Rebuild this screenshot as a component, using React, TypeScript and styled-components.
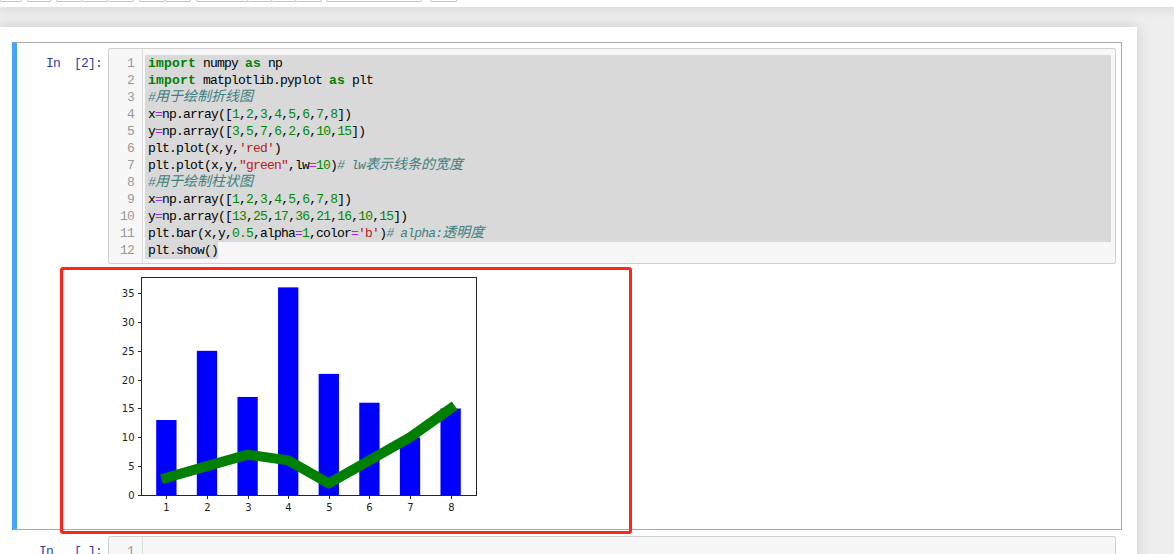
import React from "react";
import styled, { createGlobalStyle, css } from "styled-components";

const GlobalStyle = createGlobalStyle`
  html, body { margin: 0; padding: 0; }
  body {
    background: #eeeeee;
    width: 1174px;
    height: 554px;
    overflow: hidden;
    font-family: "Liberation Mono", "Noto Sans CJK SC", monospace;
  }
`;

const Page = styled.div`
  position: relative;
  width: 1174px;
  height: 554px;
  overflow: hidden;
`;

const Header = styled.div`
  position: relative;
  z-index: 2;
  height: 7px;
  background: #ffffff;
  box-shadow: 0 0 12px 1px rgba(87, 87, 87, 0.2);
  display: flex;
  align-items: flex-start;
`;

const ToolGroup = styled.div<{ $gap: number }>`
  display: flex;
  margin-left: ${(p) => p.$gap}px;
`;

const ToolButton = styled.div<{ $w: number }>`
  box-sizing: border-box;
  width: ${(p) => p.$w}px;
  height: 2px;
  border: 1px solid #c4c4c4;
  border-top: none;
  border-radius: 0 0 2px 2px;
  background: #ffffff;
  & + & {
    border-left: none;
  }
`;

const Site = styled.div`
  padding-top: 20px;
`;

const Container = styled.div`
  position: relative;
  z-index: 1;
  box-sizing: border-box;
  width: 1137px;
  min-height: 540px;
  background: #ffffff;
  box-shadow: 0 0 12px 1px rgba(87, 87, 87, 0.2);
  padding: 15px 15px 0 12px;
`;

const Cell = styled.div<{ $selected?: boolean }>`
  box-sizing: border-box;
  padding: 5px;
  ${(p) =>
    p.$selected
      ? css`
          border: 1px solid #ababab;
          border-left: 5px solid #42a5f5;
        `
      : css`
          border: 1px solid transparent;
        `}
`;

const Row = styled.div`
  display: flex;
  align-items: stretch;
`;

const Prompt = styled.div<{ $w: number }>`
  box-sizing: border-box;
  flex: 0 0 ${(p) => p.$w}px;
  padding: 7px 6px 0 0;
  text-align: right;
  color: #303f9f;
  font-size: 13px;
  letter-spacing: -0.8px;
  line-height: 17px;
  white-space: pre;
`;

const InputArea = styled.div`
  flex: 1;
  display: flex;
  border: 1px solid #cfcfcf;
  border-radius: 2px;
  background: #f7f7f7;
  font-size: 13px;
  letter-spacing: -0.8px;
  line-height: 17px;
`;

const Gutter = styled.div`
  box-sizing: border-box;
  flex: 0 0 34px;
  padding: 6px 8px 4px 0;
  border-right: 1px solid #dddddd;
  text-align: right;
  color: #999999;
`;

const GutterNum = styled.div`
  height: 17px;
`;

const Lines = styled.div`
  flex: 1;
  padding: 6px 4px 4px 2px;
  color: #000000;
`;

const Line = styled.div<{ $sel?: boolean }>`
  height: 17px;
  white-space: pre;
  padding-left: ${(p) => (p.$sel ? 3 : 0)}px;
  background: ${(p) => (p.$sel ? "#d9d9d9" : "transparent")};
`;

const PartSel = styled.span`
  display: inline-block;
  height: 17px;
  padding-left: 3px;
  background: #d9d9d9;
`;

const Kw = styled.span`
  color: #008000;
  font-weight: bold;
  letter-spacing: 0.2px;
`;
const Str = styled.span`
  color: #ba2121;
`;
const Num = styled.span`
  color: #008800;
`;
const Op = styled.span`
  color: #aa22ff;
`;
const Cm = styled.span`
  color: #408080;
  font-style: italic;
`;
const Cjk = styled.span`
  font-family: "Noto Sans CJK SC", sans-serif;
  font-size: 14px;
  letter-spacing: 0;
  line-height: 10px;
`;

const OutputBody = styled.div`
  padding: 4px 0;
  height: 252px;
`;

const Annotation = styled.div`
  position: absolute;
  left: 60px;
  top: 267px;
  width: 572px;
  height: 267px;
  box-sizing: border-box;
  border: 3px solid #ff2318;
  border-radius: 3px;
  pointer-events: none;
  z-index: 5;
`;

const toolGroups: { gap: number; widths: number[] }[] = [
  { gap: 0, widths: [22] },
  { gap: 5, widths: [24] },
  { gap: 5, widths: [26, 26, 26] },
  { gap: 5, widths: [26, 26] },
  { gap: 5, widths: [52, 24, 24, 26] },
  { gap: 4, widths: [96] },
  { gap: 8, widths: [27] },
];

const C = ({ children }: { children: React.ReactNode }) => <Cjk>{children}</Cjk>;

const arr = (nums: number[]) => (
  <>
    {"np.array(["}
    {nums.map((n, i) => (
      <React.Fragment key={i}>
        {i > 0 ? "," : ""}
        <Num>{n}</Num>
      </React.Fragment>
    ))}
    {"])"}
  </>
);

const codeLines: React.ReactNode[] = [
  <>
    <Kw>import</Kw> numpy <Kw>as</Kw> np
  </>,
  <>
    <Kw>import</Kw> matplotlib.pyplot <Kw>as</Kw> plt
  </>,
  <Cm>
    #<C>用于绘制折线图</C>
  </Cm>,
  <>
    x<Op>=</Op>
    {arr([1, 2, 3, 4, 5, 6, 7, 8])}
  </>,
  <>
    y<Op>=</Op>
    {arr([3, 5, 7, 6, 2, 6, 10, 15])}
  </>,
  <>
    plt.plot(x,y,<Str>'red'</Str>)
  </>,
  <>
    plt.plot(x,y,<Str>"green"</Str>,lw<Op>=</Op>
    <Num>10</Num>)
    <Cm>
      # lw<C>表示线条的宽度</C>
    </Cm>
  </>,
  <Cm>
    #<C>用于绘制柱状图</C>
  </Cm>,
  <>
    x<Op>=</Op>
    {arr([1, 2, 3, 4, 5, 6, 7, 8])}
  </>,
  <>
    y<Op>=</Op>
    {arr([13, 25, 17, 36, 21, 16, 10, 15])}
  </>,
  <>
    plt.bar(x,y,<Num>0.5</Num>,alpha<Op>=</Op>
    <Num>1</Num>,color<Op>=</Op>
    <Str>'b'</Str>)
    <Cm>
      # alpha:<C>透明度</C>
    </Cm>
  </>,
];

const xs = [1, 2, 3, 4, 5, 6, 7, 8];
const lineY = [3, 5, 7, 6, 2, 6, 10, 15];
const barY = [13, 25, 17, 36, 21, 16, 10, 15];

const AX_L = 34;
const AX_T = 9;
const AX_W = 335;
const AX_H = 218;
const X = (u: number) => AX_L + (u - 0.375) * (AX_W / 8.25);
const Y = (v: number) => AX_T + AX_H - v * (AX_H / 37.8);

const Chart = () => {
  const bw = 0.5 * (AX_W / 8.25);
  const pts = xs.map((u, i) => `${(X(u) - 1).toFixed(2)},${Y(lineY[i]).toFixed(2)}`).join(" ");
  const bottom = AX_T + AX_H + 0.5;
  return (
    <svg width="380" height="252" viewBox="0 0 380 252" style={{ display: "block" }}>
      {xs.map((u, i) => (
        <rect
          key={u}
          x={X(u) - 1 - bw / 2}
          y={Y(barY[i])}
          width={bw}
          height={AX_T + AX_H - Y(barY[i])}
          fill="#0000ff"
        />
      ))}
      <polyline
        points={pts}
        fill="none"
        stroke="#008000"
        strokeWidth={10}
        strokeLinejoin="round"
        strokeLinecap="square"
      />
      <rect
        x={AX_L - 0.5}
        y={AX_T + 0.5}
        width={AX_W}
        height={AX_H}
        fill="none"
        stroke="#262626"
        strokeWidth={1}
      />
      {[0, 5, 10, 15, 20, 25, 30, 35].map((v) => {
        const y = Math.round(Y(v)) + 0.5;
        return (
          <g key={v}>
            <line x1={AX_L - 4} x2={AX_L - 0.5} y1={y} y2={y} stroke="#262626" strokeWidth={1} />
            <text
              x={AX_L - 7.5}
              y={y + 3.5}
              textAnchor="end"
              fontFamily="DejaVu Sans, sans-serif"
              fontSize="10"
              fill="#222"
            >
              {v}
            </text>
          </g>
        );
      })}
      {xs.map((u) => {
        const x = Math.round(X(u) - 1) + 0.5;
        return (
          <g key={u}>
            <line x1={x} x2={x} y1={bottom} y2={bottom + 3.5} stroke="#262626" strokeWidth={1} />
            <text
              x={x}
              y={bottom + 15}
              textAnchor="middle"
              fontFamily="DejaVu Sans, sans-serif"
              fontSize="10"
              fill="#222"
            >
              {u}
            </text>
          </g>
        );
      })}
    </svg>
  );
};

export default function App() {
  return (
    <Page>
      <GlobalStyle />
      <Header>
        {toolGroups.map((g, gi) => (
          <ToolGroup key={gi} $gap={g.gap}>
            {g.widths.map((w, bi) => (
              <ToolButton key={bi} $w={w} />
            ))}
          </ToolGroup>
        ))}
      </Header>
      <Site>
        <Container>
          <Cell $selected>
            <Row>
              <Prompt $w={86}>{"In  [2]:"}</Prompt>
              <InputArea>
                <Gutter>
                  {Array.from({ length: 12 }, (_, i) => (
                    <GutterNum key={i}>{i + 1}</GutterNum>
                  ))}
                </Gutter>
                <Lines>
                  {codeLines.map((c, i) => (
                    <Line key={i} $sel>
                      {c}
                    </Line>
                  ))}
                  <Line>
                    <PartSel>plt.show()</PartSel>
                  </Line>
                </Lines>
              </InputArea>
            </Row>
            <Row>
              <Prompt $w={86} />
              <OutputBody>
                <Chart />
              </OutputBody>
            </Row>
          </Cell>
          <Cell>
            <Row>
              <Prompt $w={90}>{"In   [ ]:"}</Prompt>
              <InputArea>
                <Gutter>
                  <GutterNum>1</GutterNum>
                </Gutter>
                <Lines>
                  <Line> </Line>
                </Lines>
              </InputArea>
            </Row>
          </Cell>
        </Container>
      </Site>
      <Annotation />
    </Page>
  );
}
